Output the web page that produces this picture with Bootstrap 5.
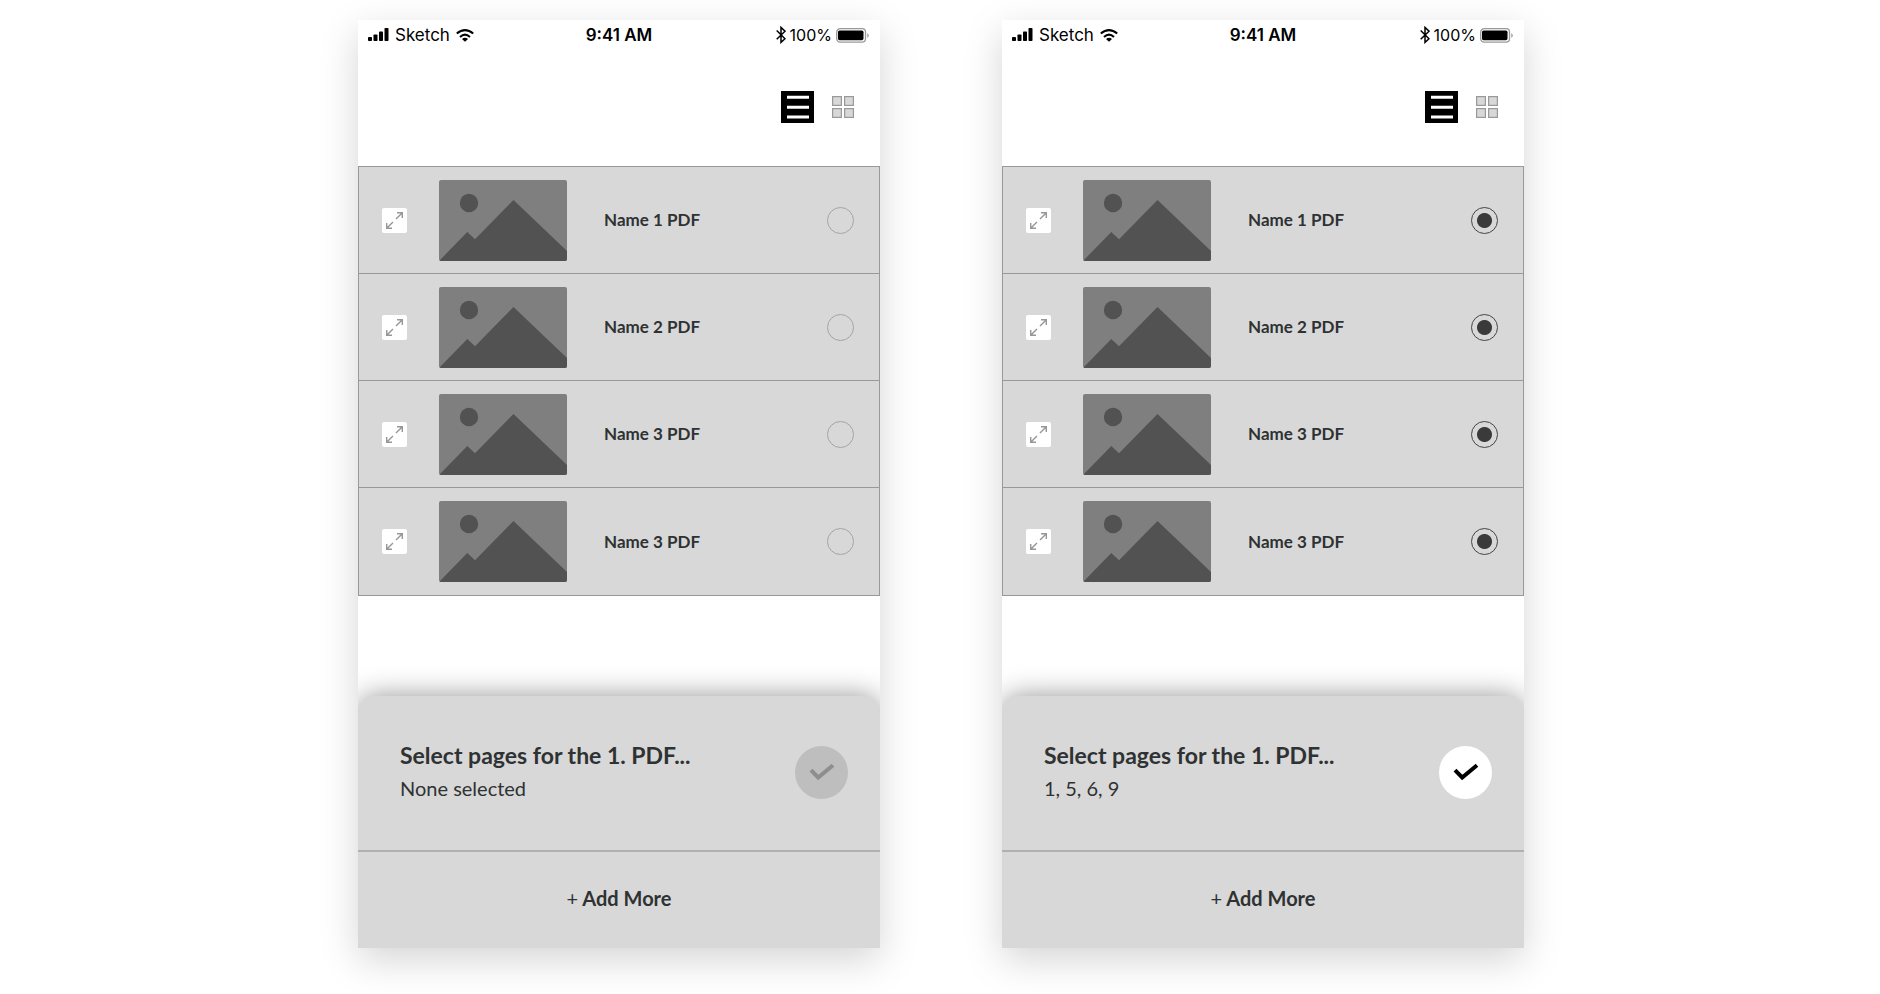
<!DOCTYPE html>
<html lang="en">
<head>
<meta charset="utf-8">
<meta name="viewport" content="width=device-width, initial-scale=1">
<title>PDF page selection</title>
<link href="https://cdn.jsdelivr.net/npm/bootstrap@5.3.0/dist/css/bootstrap.min.css" rel="stylesheet">
<style>
  body { background: #fff; color: #2f3233; font-family: Lato, "Open Sans", sans-serif; }
  .screens { gap: 122px; padding: 20px 16px 44px 18px; }
  .phone { flex: 0 1 522px; min-width: 320px; background: #fff; box-shadow: 0 12px 36px rgba(0, 0, 0, .17); overflow: hidden; }
  .status-bar { padding: 2px 10px 0; height: 28px; color: #000; font: 400 17px/24px Inter, sans-serif; }
  .status-bar > * { flex: 1 1 0; }
  .status-carrier { gap: 6px; }
  .status-time { font-weight: 600; }
  .status-power { font-size: 16px; gap: 4px; }
  .view-switch { height: 118px; padding: 43px 21px 0; gap: 13px; }
  .icon-btn { border: 0; padding: 0; background: none; display: grid; place-items: center; }
  .view-list { width: 33px; height: 32px; background: #000; }
  .view-grid { width: 32px; height: 32px; }
  .file-list { border: 1px solid #999; background: #d8d8d8; }
  .file-row { height: 107px; padding: 0 25px 0 23px; border-bottom: 1px solid #999; }
  .file-row:last-child { border-bottom: 0; }
  .expand-btn { width: 25px; height: 25px; background: #fff; border-radius: 2px; }
  .thumb { width: 128px; height: 81px; margin-left: 32px; margin-right: 37px; border-radius: 2px; flex-shrink: 0; }
  .file-name { font-size: 17px; font-weight: 700; line-height: 24px; }
  .pick.form-check-input { width: 27px; height: 27px; margin: 0; border: 1px solid #a4a4a4; background: none; }
  .pick.form-check-input:checked { border-color: #444; background: radial-gradient(circle, #3a3a3a 0 7px, transparent 8px); }
  .sheet { margin-top: 100px; background: #d8d8d8; border-radius: 18px 18px 0 0; box-shadow: 0 0 28px rgba(0, 0, 0, .42); }
  .sheet-head { height: 154px; padding: 0 32px 2px 42px; }
  .sheet-title { font-size: 23px; font-weight: 700; line-height: 32px; margin: 0; }
  .sheet-note { font-size: 20px; line-height: 34px; margin: 0; }
  .done-btn { width: 53px; height: 53px; border-radius: 50%; background: #fff; color: #000; }
  .done-btn:disabled { background: #bebebe; color: #8e8e8e; }
  .add-btn { height: 98px; padding: 0 0 4px; border: 0; border-top: 2px solid #b0b0b0; background: none; color: inherit; font-size: 20px; font-weight: 700; }
</style>
</head>
<body>
<svg width="0" height="0" class="position-absolute" aria-hidden="true">
  <symbol id="signal" viewBox="0 0 21 14"><rect x="0" y="9" width="4" height="4" rx=".8"/><rect x="5.5" y="6.5" width="4" height="6.5" rx=".8"/><rect x="11" y="3.5" width="4" height="9.5" rx=".8"/><rect x="16.5" y="0" width="4" height="13" rx=".8"/></symbol>
  <symbol id="wifi" viewBox="0 0 18 13"><path d="M.8 4.6Q9-2.4 17.2 4.6M4 7.9Q9 3.4 14 7.9" fill="none" stroke="#000" stroke-width="2"/><path d="M6 9.9Q9 7.4 12 9.9L9 12.8Z"/></symbol>
  <symbol id="bluetooth" viewBox="0 0 10 18"><path d="M.7 4.5 9 12.7 5 16.4V1.4L9 5.2.7 13.3" fill="none" stroke="#000" stroke-width="1.5"/></symbol>
  <symbol id="battery" viewBox="0 0 34 15"><rect x=".7" y=".7" width="28.8" height="13.4" rx="3.4" fill="#fff" stroke="#999" stroke-width="1.3"/><rect x="2" y="2.6" width="25.5" height="9.6" rx="1.6"/><path d="M31.3 5q3 2.4 0 5z" fill="#999"/></symbol>
  <symbol id="lines" viewBox="0 0 33 32"><path d="M6 6.3h22M6 16.3h22M6 26h22" stroke="#fff" stroke-width="3"/></symbol>
  <symbol id="tiles" viewBox="0 0 22 22"><g fill="#d8d8d8" stroke="#999" stroke-width="1.2"><rect x=".6" y=".6" width="8.8" height="8.8"/><rect x="12.6" y=".6" width="8.8" height="8.8"/><rect x=".6" y="12.6" width="8.8" height="8.8"/><rect x="12.6" y="12.6" width="8.8" height="8.8"/></g></symbol>
  <symbol id="expand" viewBox="0 0 25 25"><path d="M14 11 20.3 4.7M15 4.7h5.3V10M11 14 4.7 20.3M4.7 15v5.3H10" fill="none" stroke="#979797" stroke-width="1.4"/></symbol>
  <symbol id="picture" viewBox="0 0 128 81"><path fill="#7f7f7f" d="M0 0h128v81H0z"/><circle cx="30" cy="23" r="9.2" fill="#525252"/><path fill="#525252" d="M0 81 28.3 52 36 59.2 74.5 20 128 71v10z"/></symbol>
  <symbol id="check" viewBox="0 0 26 18"><path d="M2 7.2 9.2 14.5 24 2.2" fill="none" stroke="currentColor" stroke-width="4"/></symbol>
</svg>

<main class="screens d-flex justify-content-center">
  <section class="phone" aria-label="No pages selected">
    <div class="status-bar d-flex align-items-center">
      <div class="status-carrier d-flex align-items-center"><svg width="21" height="14"><use href="#signal"/></svg><span>Sketch</span><svg width="18" height="13"><use href="#wifi"/></svg></div>
      <div class="status-time text-center">9:41 AM</div>
      <div class="status-power d-flex align-items-center justify-content-end"><svg width="10" height="18"><use href="#bluetooth"/></svg><span>100%</span><svg width="34" height="15"><use href="#battery"/></svg></div>
    </div>
    <div class="view-switch d-flex justify-content-end align-items-start">
      <button type="button" class="icon-btn view-list" aria-label="List view"><svg width="33" height="32"><use href="#lines"/></svg></button>
      <button type="button" class="icon-btn view-grid" aria-label="Grid view"><svg width="22" height="22"><use href="#tiles"/></svg></button>
    </div>
    <div class="file-list">
      <div class="file-row d-flex align-items-center"><button type="button" class="icon-btn expand-btn" aria-label="Expand"><svg width="25" height="25"><use href="#expand"/></svg></button><svg class="thumb"><use href="#picture"/></svg><label class="file-name flex-grow-1" for="a1">Name 1 PDF</label><input class="pick form-check-input rounded-circle" type="checkbox" id="a1"></div>
      <div class="file-row d-flex align-items-center"><button type="button" class="icon-btn expand-btn" aria-label="Expand"><svg width="25" height="25"><use href="#expand"/></svg></button><svg class="thumb"><use href="#picture"/></svg><label class="file-name flex-grow-1" for="a2">Name 2 PDF</label><input class="pick form-check-input rounded-circle" type="checkbox" id="a2"></div>
      <div class="file-row d-flex align-items-center"><button type="button" class="icon-btn expand-btn" aria-label="Expand"><svg width="25" height="25"><use href="#expand"/></svg></button><svg class="thumb"><use href="#picture"/></svg><label class="file-name flex-grow-1" for="a3">Name 3 PDF</label><input class="pick form-check-input rounded-circle" type="checkbox" id="a3"></div>
      <div class="file-row d-flex align-items-center"><button type="button" class="icon-btn expand-btn" aria-label="Expand"><svg width="25" height="25"><use href="#expand"/></svg></button><svg class="thumb"><use href="#picture"/></svg><label class="file-name flex-grow-1" for="a4">Name 3 PDF</label><input class="pick form-check-input rounded-circle" type="checkbox" id="a4"></div>
    </div>
    <div class="sheet">
      <div class="sheet-head d-flex align-items-center justify-content-between">
        <div><h2 class="sheet-title">Select pages for the 1. PDF...</h2><p class="sheet-note">None selected</p></div>
        <button type="button" class="icon-btn done-btn" aria-label="Done" disabled><svg width="26" height="18"><use href="#check"/></svg></button>
      </div>
      <button type="button" class="add-btn w-100"><span class="fw-normal">+</span> Add More</button>
    </div>
  </section>

  <section class="phone" aria-label="Pages selected">
    <div class="status-bar d-flex align-items-center">
      <div class="status-carrier d-flex align-items-center"><svg width="21" height="14"><use href="#signal"/></svg><span>Sketch</span><svg width="18" height="13"><use href="#wifi"/></svg></div>
      <div class="status-time text-center">9:41 AM</div>
      <div class="status-power d-flex align-items-center justify-content-end"><svg width="10" height="18"><use href="#bluetooth"/></svg><span>100%</span><svg width="34" height="15"><use href="#battery"/></svg></div>
    </div>
    <div class="view-switch d-flex justify-content-end align-items-start">
      <button type="button" class="icon-btn view-list" aria-label="List view"><svg width="33" height="32"><use href="#lines"/></svg></button>
      <button type="button" class="icon-btn view-grid" aria-label="Grid view"><svg width="22" height="22"><use href="#tiles"/></svg></button>
    </div>
    <div class="file-list">
      <div class="file-row d-flex align-items-center"><button type="button" class="icon-btn expand-btn" aria-label="Expand"><svg width="25" height="25"><use href="#expand"/></svg></button><svg class="thumb"><use href="#picture"/></svg><label class="file-name flex-grow-1" for="b1">Name 1 PDF</label><input class="pick form-check-input rounded-circle" type="checkbox" id="b1" checked></div>
      <div class="file-row d-flex align-items-center"><button type="button" class="icon-btn expand-btn" aria-label="Expand"><svg width="25" height="25"><use href="#expand"/></svg></button><svg class="thumb"><use href="#picture"/></svg><label class="file-name flex-grow-1" for="b2">Name 2 PDF</label><input class="pick form-check-input rounded-circle" type="checkbox" id="b2" checked></div>
      <div class="file-row d-flex align-items-center"><button type="button" class="icon-btn expand-btn" aria-label="Expand"><svg width="25" height="25"><use href="#expand"/></svg></button><svg class="thumb"><use href="#picture"/></svg><label class="file-name flex-grow-1" for="b3">Name 3 PDF</label><input class="pick form-check-input rounded-circle" type="checkbox" id="b3" checked></div>
      <div class="file-row d-flex align-items-center"><button type="button" class="icon-btn expand-btn" aria-label="Expand"><svg width="25" height="25"><use href="#expand"/></svg></button><svg class="thumb"><use href="#picture"/></svg><label class="file-name flex-grow-1" for="b4">Name 3 PDF</label><input class="pick form-check-input rounded-circle" type="checkbox" id="b4" checked></div>
    </div>
    <div class="sheet">
      <div class="sheet-head d-flex align-items-center justify-content-between">
        <div><h2 class="sheet-title">Select pages for the 1. PDF...</h2><p class="sheet-note">1, 5, 6, 9</p></div>
        <button type="button" class="icon-btn done-btn" aria-label="Done"><svg width="26" height="18"><use href="#check"/></svg></button>
      </div>
      <button type="button" class="add-btn w-100"><span class="fw-normal">+</span> Add More</button>
    </div>
  </section>
</main>
<script src="https://cdn.jsdelivr.net/npm/bootstrap@5.3.0/dist/js/bootstrap.bundle.min.js"></script>
</body>
</html>
